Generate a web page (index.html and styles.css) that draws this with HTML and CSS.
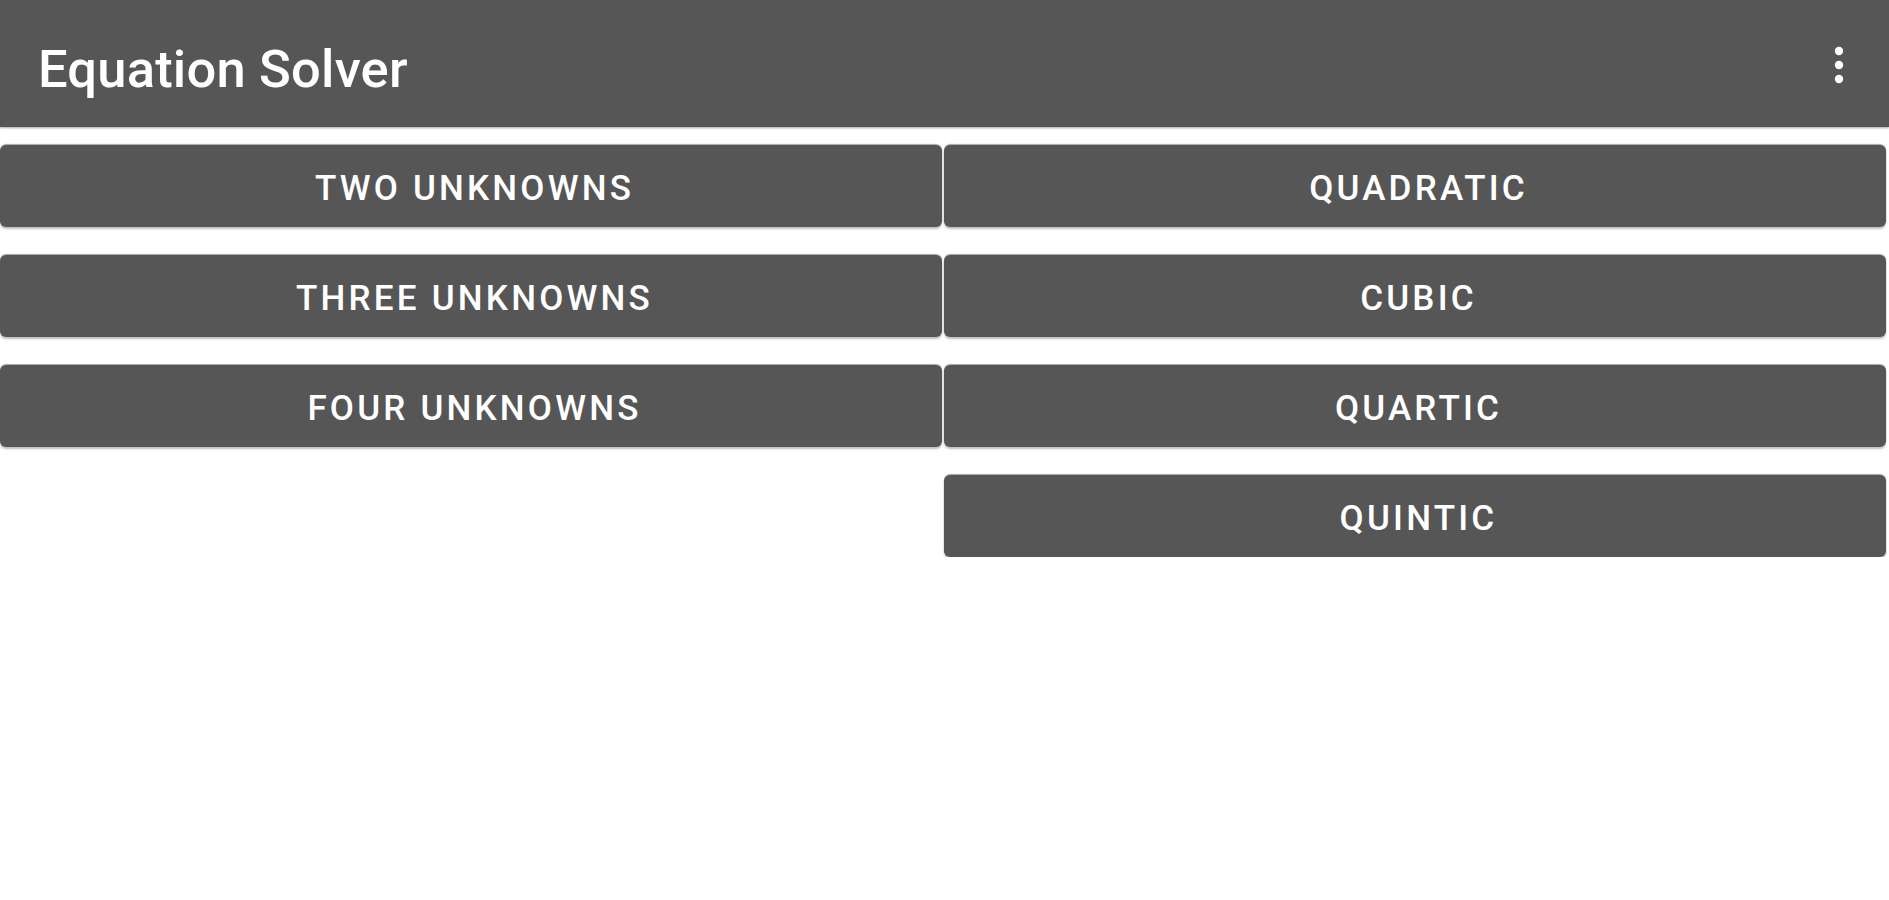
FILE: index.html
```html
<!DOCTYPE html>
<html>
<head>
<meta charset="utf-8">
<link rel="stylesheet" href="styles.css">
</head>
<body>
<header class="appbar">
  <h1 class="title">Equation Solver</h1>
  <button class="menu" aria-label="More options">
    <svg width="12" height="40" viewBox="0 0 12 40"><circle cx="6" cy="6" r="4.2" fill="#fff"/><circle cx="6" cy="20" r="4.2" fill="#fff"/><circle cx="6" cy="34" r="4.2" fill="#fff"/></svg>
  </button>
</header>
<main class="grid">
  <div class="col">
    <button class="btn">TWO UNKNOWNS</button>
    <button class="btn">THREE UNKNOWNS</button>
    <button class="btn">FOUR UNKNOWNS</button>
  </div>
  <div class="col">
    <button class="btn">QUADRATIC</button>
    <button class="btn">CUBIC</button>
    <button class="btn">QUARTIC</button>
    <button class="btn">QUINTIC</button>
  </div>
</main>
</body>
</html>
```
FILE: styles.css
```css
html, body {
  margin: 0;
  padding: 0;
  background: #ffffff;
  font-family: Roboto, "Liberation Sans", sans-serif;
}
.appbar {
  height: 127px;
  background: #565656;
  display: flex;
  align-items: center;
  justify-content: space-between;
  padding: 0 38px 0 38px;
  box-sizing: border-box;
  box-shadow: 0 1px 2px rgba(0,0,0,0.35);
}
.title {
  margin: 0;
  padding-top: 10px;
  color: #ffffff;
  font-size: 52.5px;
  font-weight: 500;
  letter-spacing: 0.2px;
}
.menu {
  background: none;
  border: 0;
  padding: 0;
  width: 24px;
  height: 44px;
  display: flex;
  align-items: center;
  justify-content: center;
  margin-top: 2px;
}
.grid {
  display: flex;
  gap: 2px;
  padding: 18px 3px 0 0;
}
.col {
  flex: 1;
  display: flex;
  flex-direction: column;
  gap: 28px;
}
.btn {
  height: 82px;
  border: 0;
  border-radius: 6px;
  background: #565656;
  color: #ffffff;
  font-family: Roboto, "Liberation Sans", sans-serif;
  font-size: 35px;
  font-weight: 500;
  letter-spacing: 3.2px;
  box-shadow: 0 -1px 1px rgba(0,0,0,0.35), 0 2px 2px rgba(0,0,0,0.25);
  padding: 4px 0 0 7px;
}
```
